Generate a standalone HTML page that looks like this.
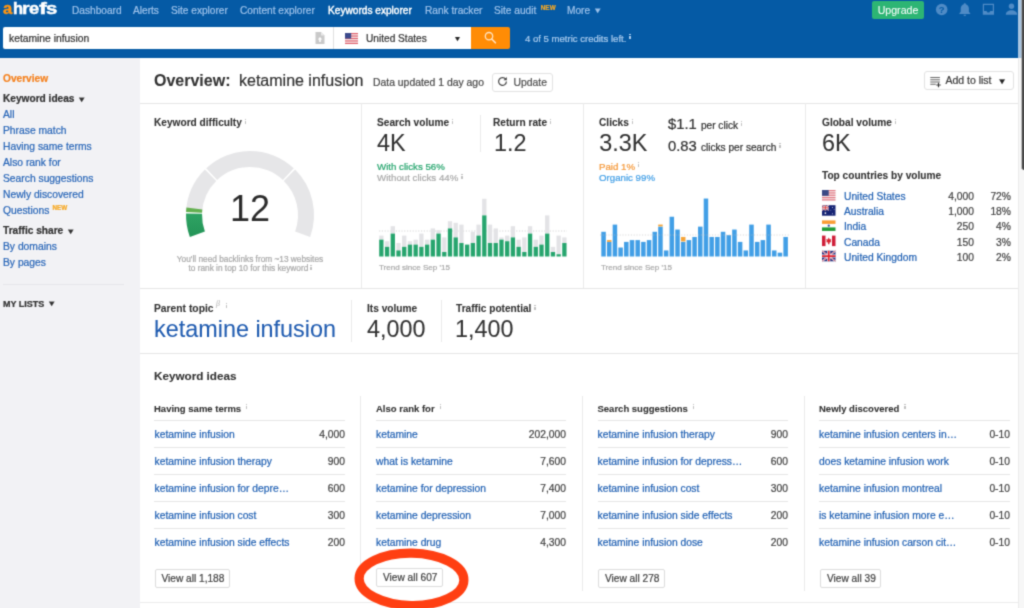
<!DOCTYPE html>
<html><head><meta charset="utf-8"><title>Keywords explorer</title>
<style>
*{box-sizing:border-box;margin:0;padding:0}
html,body{width:1024px;height:608px;overflow:hidden;background:#fff}
body{font-family:"Liberation Sans",sans-serif;font-size:10.15px;color:#333;position:relative}
.a{position:absolute;white-space:nowrap;line-height:1}
.hdr{left:-12px;top:-12px;width:1048px;height:70px;background:#055aa5}
.nav{top:4.6px;font-size:10.15px;color:#9cc1ea;line-height:11px}
.nav.on{color:#fff;font-weight:normal;-webkit-text-stroke:0.4px #fff}
.side{left:-12px;top:58px;width:152px;height:562px;background:#f2f2f5}
.sl{left:3px;font-size:10.3px;margin-top:.4px;color:#2a67b8;line-height:11px}
.sb{left:3px;font-size:10.15px;margin-top:.4px;color:#333;font-weight:bold;line-height:11px}
.b{font-weight:bold;color:#333;-webkit-text-stroke:0.08px}
.lnk{color:#2463b4}
.big{font-size:23.4px;color:#333;line-height:24px;margin-top:1.2px;-webkit-text-stroke:0.05px}
.i{display:inline-block;width:1.25px;height:5px;margin-left:3px;position:relative;top:-2.5px;font-size:0;line-height:0;vertical-align:baseline;background:linear-gradient(#c2c2c2 0,#c2c2c2 1.15px,transparent 1.15px,transparent 1.9px,#c2c2c2 1.9px,#c2c2c2 100%)}
.ib{background:linear-gradient(#a9cbee 0,#a9cbee 1.15px,transparent 1.15px,transparent 1.9px,#a9cbee 1.9px,#a9cbee 100%)}
.beta{font-size:8px;font-style:italic;font-weight:normal;color:#bdbdbd;position:relative;top:-5.6px;margin-left:2.5px;font-family:"Liberation Serif",serif}
.hl{position:absolute;height:1px;background:#e6e6e6}
.vl{position:absolute;width:1px;background:#eaeaea}
.btn{position:absolute;border:1px solid #dcdcdc;border-radius:2px;background:#fff;color:#444;font-size:10.15px;line-height:11px;white-space:nowrap}
.kw{font-size:10.3px;line-height:11px;color:#2463b4}
.num{font-size:10.3px;line-height:11px;color:#444;text-align:right}
.ct{font-size:9.7px;line-height:10px}
.new{font-size:6.3px;color:#f7a823;font-weight:bold;position:relative;top:-4px;margin-left:2px;letter-spacing:0.1px}
#wrap{position:absolute;left:-12px;top:-12px;width:1048px;height:632px;overflow:hidden;will-change:transform;filter:url(#soft);background:#fff}
#page{position:absolute;left:12px;top:12px;width:1024px;height:608px;-webkit-text-stroke:0.22px}
</style></head><body><svg width="0" height="0" style="position:absolute"><defs><filter id="soft" x="0" y="0" width="100%" height="100%" color-interpolation-filters="sRGB"><feConvolveMatrix order="3" kernelMatrix="1 4 1 4 16 4 1 4 1" divisor="36" edgeMode="duplicate" preserveAlpha="true"/></filter></defs></svg><div id="wrap"><div id="page">

<!-- ================= HEADER ================= -->
<div class="a hdr"></div>
<div class="a" id="logo" style="left:0;top:0;width:60px;height:20px"><span style="position:absolute;left:2.6px;top:-1.7px;font-size:18px;font-weight:bold;line-height:20px;color:#ff9512;-webkit-text-stroke:0.5px #ff9512;transform-origin:0 16px;transform:scale(0.92,0.95)">a</span><span style="position:absolute;left:12.6px;top:-1.7px;font-size:18px;font-weight:bold;line-height:20px;color:#fff;-webkit-text-stroke:0.5px #fff;transform-origin:0 16px;transform:scale(0.92,0.95)">h</span><span style="position:absolute;left:22.3px;top:-1.7px;font-size:18px;font-weight:bold;line-height:20px;color:#fff;-webkit-text-stroke:0.5px #fff;transform-origin:0 16px;transform:scale(1.08,0.95)">r</span><span style="position:absolute;left:28.9px;top:-1.7px;font-size:18px;font-weight:bold;line-height:20px;color:#fff;-webkit-text-stroke:0.5px #fff;transform-origin:0 16px;transform:scale(1.02,0.95)">e</span><span style="position:absolute;left:39.3px;top:-1.7px;font-size:18px;font-weight:bold;line-height:20px;color:#fff;-webkit-text-stroke:0.5px #fff;transform-origin:0 16px;transform:scale(1.3,0.95)">f</span><span style="position:absolute;left:45.9px;top:-1.7px;font-size:18px;font-weight:bold;line-height:20px;color:#fff;-webkit-text-stroke:0.5px #fff;transform-origin:0 16px;transform:scale(1.13,0.95)">s</span></div>
<div class="a nav" style="left:72px">Dashboard</div>
<div class="a nav" style="left:133px">Alerts</div>
<div class="a nav" style="left:171px">Site explorer</div>
<div class="a nav" style="left:240px">Content explorer</div>
<div class="a nav on" style="left:328px">Keywords explorer</div>
<div class="a nav" style="left:425px">Rank tracker</div>
<div class="a nav" style="left:494px">Site audit<span class="new" style="margin-left:4.5px">NEW</span></div>
<div class="a nav" style="left:567px">More <span style="font-size:7.5px;position:relative;top:-0.8px;display:inline-block;transform:scaleX(1.2);margin-left:1px">&#9660;</span></div>

<div class="a" style="left:872px;top:1px;width:52px;height:18px;background:#2db574;border-radius:2px;color:#fff;font-size:10.6px;line-height:18px;text-align:center;-webkit-text-stroke:0.05px">Upgrade</div>
<svg class="a" style="left:930px;top:0" width="94" height="22" viewBox="930 0 94 22">
 <circle cx="941.7" cy="9.5" r="5.8" fill="#4f8bc6"/>
 <text x="941.7" y="13" font-family="Liberation Sans" font-weight="bold" font-size="9.5" fill="#055aa5" text-anchor="middle">?</text>
 <path d="M964.8 3.2c-.7 0-1.1.5-1.1 1.1-2 .6-3 2.300-3 4.400v3l-1.400 1.700v.6h11v-.6l-1.400-1.700v-3c0-2.100-1-3.800-3-4.400 0-.6-.4-1.100-1.100-1.100zM963.5 14.800a1.300 1.300 0 0 0 2.600 0z" fill="#4f8bc6"/>
 <path d="M982.8 3.800h11.200v11h-11.200z M984 5v6h2.500l1 1.600h1.800l1-1.600h2.500v-6z" fill="#4f8bc6" fill-rule="evenodd"/>
 <circle cx="1011.500" cy="6.300" r="2.700" fill="#4f8bc6"/>
 <path d="M1005.800 14.800c0-3 2.500-4.500 5.700-4.500s5.700 1.500 5.700 4.500z" fill="#4f8bc6"/>
</svg>

<!-- search row -->
<div class="a" style="left:3px;top:27px;width:468px;height:22px;background:#fff;border-radius:2px 0 0 2px"></div>
<div class="a" style="left:9px;top:33px;font-size:10.3px;color:#333;line-height:11px">ketamine infusion</div>
<svg class="a" style="left:314px;top:31px" width="12" height="14" viewBox="0 0 12 14"><path d="M1.500 1h5.500l3.500 3.500v8.500h-9z" fill="#c9c9c9"/><path d="M7 1v3.500h3.500z" fill="#e9e9e9"/><path d="M6 6l2.300 2.600h-1.500v2.400h-1.600v-2.400h-1.500z" fill="#fff"/></svg>
<div class="vl" style="left:333px;top:27px;height:22px;background:#e0e0e0"></div>
<svg class="a" style="left:344.5px;top:32.5px" width="13" height="11" viewBox="0 0 13 11"><rect width="13" height="11" fill="#f6eeee"/><g fill="#e0606c"><rect y="0" width="13" height="1.2"/><rect y="2.450" width="13" height="1.2"/><rect y="4.900" width="13" height="1.2"/><rect y="7.350" width="13" height="1.2"/><rect y="9.800" width="13" height="1.2"/></g><rect width="6.200" height="5.600" fill="#3c4a8c"/></svg>
<div class="a" style="left:366px;top:33px;font-size:10.15px;color:#333;line-height:11px">United States</div>
<div class="a" style="left:453.5px;top:34.5px;font-size:7px;color:#222;line-height:8px;transform:scaleX(1.15)">&#9660;</div>
<div class="a" style="left:471px;top:27px;width:39.3px;height:21.8px;background:#ff8c05;border-radius:0 2px 2px 0"></div>
<svg class="a" style="left:482px;top:29px" width="18" height="18" viewBox="482 29 18 18"><circle cx="489" cy="36.2" r="3.700" fill="none" stroke="#ffe3c2" stroke-width="1.300"/><path d="M491.700 39l3.700 3.800" stroke="#ffe3c2" stroke-width="1.600" stroke-linecap="round"/></svg>
<div class="a" style="left:525px;top:33.500px;font-size:9.55px;color:#a9cbee;line-height:10px">4 of 5 metric credits left.<span class="i ib" style="margin-left:3px;top:-2.8px"></span></div>

<!-- ================= SIDEBAR ================= -->
<div class="a side"></div>
<div class="a sb" style="top:72.6px;color:#f5821f">Overview</div>
<div class="a sb" style="top:93px">Keyword ideas <span style="font-size:7.5px;position:relative;top:-0.8px;display:inline-block;transform:scaleX(1.2);margin-left:1px">&#9660;</span></div>
<div class="a sl" style="top:109px">All</div>
<div class="a sl" style="top:125px">Phrase match</div>
<div class="a sl" style="top:141px">Having same terms</div>
<div class="a sl" style="top:157px">Also rank for</div>
<div class="a sl" style="top:173px">Search suggestions</div>
<div class="a sl" style="top:189px">Newly discovered</div>
<div class="a sl" style="top:205px">Questions<span class="new" style="margin-left:3px">NEW</span></div>
<div class="a sb" style="top:225px">Traffic share <span style="font-size:7.5px;position:relative;top:-0.8px;display:inline-block;transform:scaleX(1.2);margin-left:1px">&#9660;</span></div>
<div class="a sl" style="top:241px">By domains</div>
<div class="a sl" style="top:257px">By pages</div>
<div class="hl" style="left:3px;top:284px;width:121px;background:#e6e6ea"></div>
<div class="a sb" style="top:299.8px;font-size:9px;line-height:9px">MY LISTS <span style="font-size:7.5px;position:relative;top:-0.8px;display:inline-block;transform:scaleX(1.2);margin-left:1px">&#9660;</span></div>

<!-- ================= TITLE ROW ================= -->
<div class="a b" style="left:154px;top:72px;font-size:16px;line-height:18px">Overview:</div>
<div class="a" style="left:239px;top:72px;font-size:16px;line-height:18px;color:#333">ketamine infusion</div>
<div class="a" style="left:373px;top:77.3px;font-size:10.4px;line-height:11px;color:#4a4a4a">Data updated 1 day ago</div>
<div class="btn" style="left:491.5px;top:72.5px;width:61.5px;height:19px;border-color:#e2e2e2;border-radius:3px"></div>
<svg class="a" style="left:497px;top:76px" width="11" height="11" viewBox="0 0 11 11"><path d="M8.700 3.200A3.900 3.900 0 1 0 9.400 5.500" fill="none" stroke="#444" stroke-width="1.200"/><path d="M9.800 1v3.300h-3.300z" fill="#444"/></svg>
<div class="a" style="left:513.5px;top:76.800px;font-size:10.4px;line-height:11px;color:#505050">Update</div>

<div class="btn" style="left:923.8px;top:71.3px;width:90px;height:18.7px;border-color:#e2e2e2;border-radius:3px"></div>
<svg class="a" style="left:929.8px;top:75.5px" width="12" height="12" viewBox="0 0 12 12"><path d="M0.300 1.500h9.600M0.300 3.750h9.600M0.300 6h9.600M0.300 8.250h5.500" stroke="#6a6a6a" stroke-width="1.150"/><path d="M8.500 6.800v4.400M6.300 9h4.400" stroke="#333" stroke-width="1.100"/></svg>
<div class="a" style="left:945.4px;top:75.400px;font-size:10.5px;line-height:11px;color:#3c3c3c">Add to list</div>
<div class="a" style="left:998px;top:77.8px;font-size:8px;color:#222;line-height:8px;transform:scaleX(1.15)">&#9660;</div>

<div class="hl" style="left:140px;top:103px;width:878px"></div>

<!-- ================= ROW 1 ================= -->
<div class="vl" style="left:361px;top:103px;height:186px"></div>
<div class="vl" style="left:583px;top:103px;height:186px"></div>
<div class="vl" style="left:805px;top:103px;height:186px"></div>
<div class="hl" style="left:140px;top:288px;width:878px"></div>

<!-- KD -->
<div class="a b" style="left:154px;top:117.4px;line-height:11px">Keyword difficulty<span class="i"></span></div>
<svg class="a" style="left:140px;top:103px" width="222" height="186" viewBox="140 103 222 186">
<defs><linearGradient id="gg" x1="0" y1="0" x2="0" y2="1"><stop offset="0" stop-color="#2fa363"/><stop offset="1" stop-color="#239457"/></linearGradient></defs>
<path d="M186.09 211.65 A64 64 0 0 1 204.90 169.59 L216.18 180.94 A48 48 0 0 0 202.07 212.49 Z" fill="#e6e6e8"/>
<path d="M206.19 168.35 A64 64 0 0 1 293.81 168.35 L282.86 180.01 A48 48 0 0 0 217.14 180.01 Z" fill="#e6e6e8"/>
<path d="M295.10 169.59 A64 64 0 0 1 310.14 236.89 L295.11 231.42 A48 48 0 0 0 283.82 180.94 Z" fill="#e6e6e8"/>
<path d="M189.86 236.89 A64 64 0 0 1 186.02 213.44 L202.01 213.83 A48 48 0 0 0 204.89 231.42 Z" fill="url(#gg)"/>
<path d="M186.07 211.99 A64 64 0 0 1 186.44 207.53 L202.33 209.40 A48 48 0 0 0 202.05 212.74 Z" fill="#63b04f"/>
</svg>
<div class="a" style="left:200px;top:191px;width:100px;text-align:center;font-size:36px;line-height:36px;color:#2b2b2b;-webkit-text-stroke:0">12</div>
<div class="a" style="left:140px;top:254.8px;width:220px;text-align:center;font-size:8.300px;line-height:9.500px;color:#aaa">You'll need backlinks from ~13 websites<br>to rank in top 10 for this keyword<span class="i" style="top:-1.5px;margin-left:2px;height:4.5px"></span></div>

<!-- Search volume -->
<div class="a b" style="left:377px;top:117.4px;line-height:11px">Search volume<span class="i"></span></div>
<div class="a big" style="left:377px;top:130px">4K</div>
<div class="vl" style="left:480px;top:115px;height:37px"></div>
<div class="a b" style="left:493px;top:117.4px;line-height:11px">Return rate<span class="i"></span></div>
<div class="a big" style="left:494px;top:130px">1.2</div>
<div class="a ct" style="left:377px;top:161.5px;color:#27a56e">With clicks 56%</div>
<div class="a ct" style="left:377px;top:173px;color:#aaa">Without clicks 44%<span class="i"></span></div>
<svg class="a" style="left:362px;top:190px" width="221" height="90" viewBox="362 190 221 90">
<path d="M379 231h188" stroke="#ccc" stroke-width="0.800" stroke-dasharray="1.200 1.600"/>
<rect x="379.20" y="235.61" width="4.3" height="4.04" fill="#e3e3e6"/>
<rect x="379.20" y="239.65" width="4.3" height="16.85" fill="#27a56e"/>
<rect x="384.92" y="241.23" width="4.3" height="5.62" fill="#e3e3e6"/>
<rect x="384.92" y="246.84" width="4.3" height="9.66" fill="#27a56e"/>
<rect x="390.64" y="226.18" width="4.3" height="7.41" fill="#e3e3e6"/>
<rect x="390.64" y="233.59" width="4.3" height="22.91" fill="#27a56e"/>
<rect x="396.36" y="243.02" width="4.3" height="7.41" fill="#e3e3e6"/>
<rect x="396.36" y="250.44" width="4.3" height="6.06" fill="#27a56e"/>
<rect x="402.08" y="235.61" width="4.3" height="11.23" fill="#e3e3e6"/>
<rect x="402.08" y="246.84" width="4.3" height="9.66" fill="#27a56e"/>
<rect x="407.80" y="241.23" width="4.3" height="3.37" fill="#e3e3e6"/>
<rect x="407.80" y="244.60" width="4.3" height="11.90" fill="#27a56e"/>
<rect x="413.52" y="239.65" width="4.3" height="4.94" fill="#e3e3e6"/>
<rect x="413.52" y="244.60" width="4.3" height="11.90" fill="#27a56e"/>
<rect x="419.24" y="233.59" width="4.3" height="13.25" fill="#e3e3e6"/>
<rect x="419.24" y="246.84" width="4.3" height="9.66" fill="#27a56e"/>
<rect x="424.96" y="239.65" width="4.3" height="4.94" fill="#e3e3e6"/>
<rect x="424.96" y="244.60" width="4.3" height="11.90" fill="#27a56e"/>
<rect x="430.68" y="228.42" width="4.3" height="11.23" fill="#e3e3e6"/>
<rect x="430.68" y="239.65" width="4.3" height="16.85" fill="#27a56e"/>
<rect x="436.40" y="230.22" width="4.3" height="3.37" fill="#e3e3e6"/>
<rect x="436.40" y="233.59" width="4.3" height="22.91" fill="#27a56e"/>
<rect x="442.12" y="237.41" width="4.3" height="14.60" fill="#e3e3e6"/>
<rect x="442.12" y="252.01" width="4.3" height="4.49" fill="#27a56e"/>
<rect x="447.84" y="221.23" width="4.3" height="7.19" fill="#e3e3e6"/>
<rect x="447.84" y="228.42" width="4.3" height="28.08" fill="#27a56e"/>
<rect x="453.56" y="222.81" width="4.3" height="14.60" fill="#e3e3e6"/>
<rect x="453.56" y="237.41" width="4.3" height="19.09" fill="#27a56e"/>
<rect x="459.28" y="224.60" width="4.3" height="18.42" fill="#e3e3e6"/>
<rect x="459.28" y="243.02" width="4.3" height="13.48" fill="#27a56e"/>
<rect x="465.00" y="244.60" width="4.3" height="11.90" fill="#27a56e"/>
<rect x="470.72" y="231.79" width="4.3" height="11.23" fill="#e3e3e6"/>
<rect x="470.72" y="243.02" width="4.3" height="13.48" fill="#27a56e"/>
<rect x="476.44" y="224.60" width="4.3" height="11.01" fill="#e3e3e6"/>
<rect x="476.44" y="235.61" width="4.3" height="20.89" fill="#27a56e"/>
<rect x="482.16" y="198.77" width="4.3" height="16.62" fill="#e3e3e6"/>
<rect x="482.16" y="215.39" width="4.3" height="41.11" fill="#27a56e"/>
<rect x="487.88" y="224.60" width="4.3" height="18.42" fill="#e3e3e6"/>
<rect x="487.88" y="243.02" width="4.3" height="13.48" fill="#27a56e"/>
<rect x="493.60" y="228.42" width="4.3" height="14.60" fill="#e3e3e6"/>
<rect x="493.60" y="243.02" width="4.3" height="13.48" fill="#27a56e"/>
<rect x="499.32" y="237.41" width="4.3" height="2.25" fill="#e3e3e6"/>
<rect x="499.32" y="239.65" width="4.3" height="16.85" fill="#27a56e"/>
<rect x="505.04" y="235.61" width="4.3" height="5.62" fill="#e3e3e6"/>
<rect x="505.04" y="241.23" width="4.3" height="15.27" fill="#27a56e"/>
<rect x="510.76" y="226.18" width="4.3" height="11.23" fill="#e3e3e6"/>
<rect x="510.76" y="237.41" width="4.3" height="19.09" fill="#27a56e"/>
<rect x="516.48" y="239.65" width="4.3" height="7.19" fill="#e3e3e6"/>
<rect x="516.48" y="246.84" width="4.3" height="9.66" fill="#27a56e"/>
<rect x="522.20" y="237.41" width="4.3" height="14.60" fill="#e3e3e6"/>
<rect x="522.20" y="252.01" width="4.3" height="4.49" fill="#27a56e"/>
<rect x="527.92" y="226.18" width="4.3" height="7.41" fill="#e3e3e6"/>
<rect x="527.92" y="233.59" width="4.3" height="22.91" fill="#27a56e"/>
<rect x="533.64" y="239.65" width="4.3" height="7.19" fill="#e3e3e6"/>
<rect x="533.64" y="246.84" width="4.3" height="9.66" fill="#27a56e"/>
<rect x="539.36" y="235.61" width="4.3" height="8.98" fill="#e3e3e6"/>
<rect x="539.36" y="244.60" width="4.3" height="11.90" fill="#27a56e"/>
<rect x="545.08" y="215.39" width="4.3" height="18.19" fill="#e3e3e6"/>
<rect x="545.08" y="233.59" width="4.3" height="22.91" fill="#27a56e"/>
<rect x="550.80" y="246.84" width="4.3" height="5.17" fill="#e3e3e6"/>
<rect x="550.80" y="252.01" width="4.3" height="4.49" fill="#27a56e"/>
<rect x="556.52" y="235.61" width="4.3" height="18.64" fill="#e3e3e6"/>
<rect x="556.52" y="254.25" width="4.3" height="2.25" fill="#27a56e"/>
<rect x="562.24" y="237.41" width="4.3" height="5.62" fill="#e3e3e6"/>
<rect x="562.24" y="243.02" width="4.3" height="13.48" fill="#27a56e"/>
</svg>
<div class="a" style="left:379px;top:263px;font-size:8.050px;line-height:9px;color:#aaa">Trend since Sep '15</div>

<!-- Clicks -->
<div class="a b" style="left:599px;top:117.4px;line-height:11px">Clicks<span class="i"></span></div>
<div class="a big" style="left:599.2px;top:130px">3.3K</div>
<div class="a" style="left:668px;top:116px;font-size:14.800px;line-height:16px;color:#333">$1.1 <span style="font-size:10.15px">per click</span><span class="i" style="top:-3px"></span></div>
<div class="a" style="left:668px;top:137.6px;font-size:14.800px;line-height:16px;color:#333">0.83 <span style="font-size:10.15px">clicks per search</span><span class="i" style="top:-3px"></span></div>
<div class="a ct" style="left:599px;top:161.5px;color:#f5993a">Paid 1%<span class="i"></span></div>
<div class="a ct" style="left:599px;top:173px;color:#429fe6">Organic 99%</div>
<svg class="a" style="left:584px;top:190px" width="221" height="90" viewBox="584 190 221 90">
<rect x="601.30" y="231.79" width="4.5" height="24.71" fill="#429fe6"/>
<rect x="606.99" y="241.90" width="4.5" height="14.60" fill="#429fe6"/>
<rect x="606.99" y="240.08" width="4.5" height="1.80" fill="#f5a53a"/>
<rect x="612.68" y="224.60" width="4.5" height="31.90" fill="#429fe6"/>
<rect x="618.37" y="247.52" width="4.5" height="8.98" fill="#429fe6"/>
<rect x="624.06" y="241.90" width="4.5" height="14.60" fill="#429fe6"/>
<rect x="629.75" y="240.10" width="4.5" height="16.40" fill="#429fe6"/>
<rect x="635.44" y="240.10" width="4.5" height="16.40" fill="#429fe6"/>
<rect x="641.13" y="241.90" width="4.5" height="14.60" fill="#429fe6"/>
<rect x="646.82" y="240.10" width="4.5" height="16.40" fill="#429fe6"/>
<rect x="652.51" y="231.79" width="4.5" height="24.71" fill="#429fe6"/>
<rect x="658.20" y="226.63" width="4.5" height="29.87" fill="#429fe6"/>
<rect x="658.20" y="224.58" width="4.5" height="1.80" fill="#f5a53a"/>
<rect x="663.89" y="250.44" width="4.5" height="6.06" fill="#429fe6"/>
<rect x="669.58" y="216.74" width="4.5" height="39.76" fill="#429fe6"/>
<rect x="675.27" y="229.55" width="4.5" height="26.95" fill="#429fe6"/>
<rect x="680.96" y="241.90" width="4.5" height="14.60" fill="#429fe6"/>
<rect x="680.96" y="236.94" width="4.5" height="4.49" fill="#f5a53a"/>
<rect x="686.65" y="240.10" width="4.5" height="16.40" fill="#429fe6"/>
<rect x="692.34" y="236.96" width="4.5" height="19.54" fill="#429fe6"/>
<rect x="698.03" y="226.63" width="4.5" height="29.87" fill="#429fe6"/>
<rect x="703.72" y="198.55" width="4.5" height="57.95" fill="#429fe6"/>
<rect x="709.41" y="236.96" width="4.5" height="19.54" fill="#429fe6"/>
<rect x="715.10" y="236.96" width="4.5" height="19.54" fill="#429fe6"/>
<rect x="720.79" y="231.79" width="4.5" height="24.71" fill="#429fe6"/>
<rect x="726.48" y="235.16" width="4.5" height="21.34" fill="#429fe6"/>
<rect x="732.17" y="229.55" width="4.5" height="26.95" fill="#429fe6"/>
<rect x="737.86" y="241.90" width="4.5" height="14.60" fill="#429fe6"/>
<rect x="743.55" y="250.44" width="4.5" height="6.06" fill="#429fe6"/>
<rect x="749.24" y="224.60" width="4.5" height="31.90" fill="#429fe6"/>
<rect x="754.93" y="241.90" width="4.5" height="14.60" fill="#429fe6"/>
<rect x="760.62" y="240.10" width="4.5" height="16.40" fill="#429fe6"/>
<rect x="766.31" y="224.60" width="4.5" height="31.90" fill="#429fe6"/>
<rect x="772.00" y="250.44" width="4.5" height="6.06" fill="#429fe6"/>
<rect x="777.69" y="252.68" width="4.5" height="3.82" fill="#429fe6"/>
<rect x="783.38" y="236.96" width="4.5" height="19.54" fill="#429fe6"/>
<path d="M600 235h190" stroke="#bbb" stroke-width="0.800" stroke-dasharray="1.200 1.600" opacity="0.700"/>
</svg>
<div class="a" style="left:601px;top:263px;font-size:8.050px;line-height:9px;color:#aaa">Trend since Sep '15</div>

<!-- Global volume -->
<div class="a b" style="left:822px;top:117.4px;line-height:11px">Global volume<span class="i"></span></div>
<div class="a big" style="left:822px;top:130px">6K</div>
<div class="a b" style="left:822px;top:170px;line-height:11px">Top countries by volume</div>

<!-- flags -->
<svg class="a" style="left:822.2px;top:189.8px" width="14" height="72" viewBox="0 0 14 72">
 <!-- US -->
 <g><rect width="13.500" height="10.500" fill="#f7ecec"/><g fill="#e27884"><rect y="0" width="13.500" height="1.2"/><rect y="2.330" width="13.500" height="1.2"/><rect y="4.660" width="13.500" height="1.2"/><rect y="7" width="13.500" height="1.2"/><rect y="9.300" width="13.500" height="1.2"/></g><rect width="6.700" height="5.800" fill="#3b4a85"/></g>
 <!-- AU -->
 <g transform="translate(0,15.200)"><rect width="13.500" height="10.500" fill="#162474"/><path d="M0 0l6.700 5.200M6.700 0L0 5.200" stroke="#fff" stroke-width="1.200"/><path d="M0 0l6.700 5.200M6.700 0L0 5.200" stroke="#d33" stroke-width="0.500"/><path d="M3.350 0v5.200M0 2.600h6.700" stroke="#fff" stroke-width="1.700"/><path d="M3.350 0v5.200M0 2.600h6.700" stroke="#d33" stroke-width="0.900"/><circle cx="3.400" cy="7.900" r="0.850" fill="#fff"/><circle cx="10.500" cy="2.200" r="0.500" fill="#dde"/><circle cx="10.500" cy="8.500" r="0.500" fill="#dde"/><circle cx="8.800" cy="4.900" r="0.450" fill="#dde"/><circle cx="12.100" cy="4.400" r="0.450" fill="#dde"/></g>
 <!-- IN -->
 <g transform="translate(0,30.400)"><rect width="13.500" height="10.500" fill="#fff"/><rect width="13.500" height="3.500" fill="#fa9c34"/><rect y="7" width="13.500" height="3.500" fill="#1f9a35"/><circle cx="6.750" cy="5.250" r="1.150" fill="#3a4aa0"/></g>
 <!-- CA -->
 <g transform="translate(0,45.600)"><rect width="13.500" height="10.500" fill="#fff"/><rect width="3.500" height="10.500" fill="#cf1f3a"/><rect x="10" width="3.500" height="10.500" fill="#cf1f3a"/><path d="M6.750 1.800l1.050 2 1.500-.35-.65 2.200.85.650-2.050.55v1.750h-1.400v-1.750l-2.050-.55.850-.65-.65-2.200 1.500.35z" fill="#d8232f"/></g>
 <!-- UK -->
 <g transform="translate(0,60.800)"><rect width="13.500" height="10.500" fill="#232e7c"/><path d="M0 0l13.500 10.500M13.500 0L0 10.500" stroke="#e8e8f4" stroke-width="1.600"/><path d="M0 0l13.500 10.500M13.500 0L0 10.500" stroke="#d8232f" stroke-width="0.600"/><path d="M6.750 0v10.500M0 5.250h13.500" stroke="#fff" stroke-width="3"/><path d="M6.750 0v10.500M0 5.250h13.500" stroke="#e0222e" stroke-width="1.800"/></g>
</svg>

<div class="a kw" style="left:844px;top:190.500px;font-size:10.25px">United States</div><div class="a num" style="left:924px;width:50px;top:190.500px">4,000</div><div class="a num" style="left:971px;width:40px;top:190.500px">72%</div>
<div class="a kw" style="left:844px;top:205.800px;font-size:10.25px">Australia</div><div class="a num" style="left:924px;width:50px;top:205.800px">1,000</div><div class="a num" style="left:971px;width:40px;top:205.800px">18%</div>
<div class="a kw" style="left:844px;top:221.200px;font-size:10.25px">India</div><div class="a num" style="left:924px;width:50px;top:221.200px">250</div><div class="a num" style="left:971px;width:40px;top:221.200px">4%</div>
<div class="a kw" style="left:844px;top:236.600px;font-size:10.25px">Canada</div><div class="a num" style="left:924px;width:50px;top:236.600px">150</div><div class="a num" style="left:971px;width:40px;top:236.600px">3%</div>
<div class="a kw" style="left:844px;top:252px;font-size:10.25px">United Kingdom</div><div class="a num" style="left:924px;width:50px;top:252px">100</div><div class="a num" style="left:971px;width:40px;top:252px">2%</div>

<!-- ================= ROW 2 ================= -->
<div class="a b" style="left:154px;top:303px;line-height:11px;font-size:10.3px">Parent topic<span class="beta">&beta;</span><span class="i" style="margin-left:6px;top:-4.3px"></span></div>
<div class="a" style="left:154px;top:316px;font-size:23.400px;line-height:26px;color:#1f5bb0;-webkit-text-stroke:0.06px">ketamine infusion</div>
<div class="vl" style="left:351px;top:300px;height:42px"></div>
<div class="a b" style="left:367px;top:303px;line-height:11px;font-size:10.15px">Its volume</div>
<div class="a big" style="left:367px;top:315.8px">4,000</div>
<div class="vl" style="left:441px;top:300px;height:42px"></div>
<div class="a b" style="left:456px;top:303px;line-height:11px;font-size:10.15px">Traffic potential<span class="i"></span></div>
<div class="a big" style="left:455px;top:315.8px">1,400</div>
<div class="hl" style="left:140px;top:353px;width:878px"></div>

<!-- ================= KEYWORD IDEAS ================= -->
<div class="a b" style="left:154px;top:370px;font-size:11.700px;line-height:12px">Keyword ideas</div>

<div class="vl" style="left:360px;top:396px;height:195px"></div>
<div class="vl" style="left:582px;top:396px;height:195px"></div>
<div class="vl" style="left:804px;top:396px;height:195px"></div>

<!-- col 1 -->
<div class="a b ch" style="left:154px;top:403.500px;font-size:9.5px;line-height:10px">Having same terms<span class="i" style="margin-left:5px"></span></div>
<div class="hl" style="left:154px;top:420px;width:191px"></div>
<div class="a kw" style="left:154.5px;top:429px">ketamine infusion</div><div class="a num" style="left:285px;width:60px;top:429px">4,000</div>
<div class="hl" style="left:154px;top:447px;width:191px"></div>
<div class="a kw" style="left:154.5px;top:456px">ketamine infusion therapy</div><div class="a num" style="left:285px;width:60px;top:456px">900</div>
<div class="hl" style="left:154px;top:474px;width:191px"></div>
<div class="a kw" style="left:154.5px;top:483px">ketamine infusion for depre&hellip;</div><div class="a num" style="left:285px;width:60px;top:483px">600</div>
<div class="hl" style="left:154px;top:501px;width:191px"></div>
<div class="a kw" style="left:154.5px;top:510px">ketamine infusion cost</div><div class="a num" style="left:285px;width:60px;top:510px">300</div>
<div class="hl" style="left:154px;top:528px;width:191px"></div>
<div class="a kw" style="left:154.5px;top:537px">ketamine infusion side effects</div><div class="a num" style="left:285px;width:60px;top:537px">200</div>
<div class="btn" style="left:155px;top:569px;width:75px;height:18.5px;padding:3.3px 0 0 5.500px">View all 1,188</div>

<!-- col 2 -->
<div class="a b ch" style="left:376px;top:403.500px;font-size:9.5px;line-height:10px">Also rank for<span class="i" style="margin-left:5px"></span></div>
<div class="hl" style="left:376px;top:420px;width:190px"></div>
<div class="a kw" style="left:376px;top:429px">ketamine</div><div class="a num" style="left:506px;width:60px;top:429px">202,000</div>
<div class="hl" style="left:376px;top:447px;width:190px"></div>
<div class="a kw" style="left:376px;top:456px">what is ketamine</div><div class="a num" style="left:506px;width:60px;top:456px">7,600</div>
<div class="hl" style="left:376px;top:474px;width:190px"></div>
<div class="a kw" style="left:376px;top:483px">ketamine for depression</div><div class="a num" style="left:506px;width:60px;top:483px">7,400</div>
<div class="hl" style="left:376px;top:501px;width:190px"></div>
<div class="a kw" style="left:376px;top:510px">ketamine depression</div><div class="a num" style="left:506px;width:60px;top:510px">7,000</div>
<div class="hl" style="left:376px;top:528px;width:190px"></div>
<div class="a kw" style="left:376px;top:537px">ketamine drug</div><div class="a num" style="left:506px;width:60px;top:537px">4,300</div>
<div class="btn" style="left:376px;top:568px;width:67px;height:18.5px;padding:3.3px 0 0 6px">View all 607</div>

<!-- col 3 -->
<div class="a b ch" style="left:597.500px;top:403.500px;font-size:9.5px;line-height:10px">Search suggestions<span class="i" style="margin-left:5px"></span></div>
<div class="hl" style="left:597.500px;top:420px;width:190.500px"></div>
<div class="a kw" style="left:597.500px;top:429px">ketamine infusion therapy</div><div class="a num" style="left:728px;width:60px;top:429px">900</div>
<div class="hl" style="left:597.500px;top:447px;width:190.500px"></div>
<div class="a kw" style="left:597.500px;top:456px">ketamine infusion for depress&hellip;</div><div class="a num" style="left:728px;width:60px;top:456px">600</div>
<div class="hl" style="left:597.500px;top:474px;width:190.500px"></div>
<div class="a kw" style="left:597.500px;top:483px">ketamine infusion cost</div><div class="a num" style="left:728px;width:60px;top:483px">300</div>
<div class="hl" style="left:597.500px;top:501px;width:190.500px"></div>
<div class="a kw" style="left:597.500px;top:510px">ketamine infusion side effects</div><div class="a num" style="left:728px;width:60px;top:510px">200</div>
<div class="hl" style="left:597.500px;top:528px;width:190.500px"></div>
<div class="a kw" style="left:597.500px;top:537px">ketamine infusion dose</div><div class="a num" style="left:728px;width:60px;top:537px">200</div>
<div class="btn" style="left:598px;top:569px;width:67px;height:18.5px;padding:3.3px 0 0 6px">View all 278</div>

<!-- col 4 -->
<div class="a b ch" style="left:819px;top:403.500px;font-size:9.5px;line-height:10px">Newly discovered<span class="i" style="margin-left:5px"></span></div>
<div class="hl" style="left:819px;top:420px;width:191px"></div>
<div class="a kw" style="left:819px;top:429px">ketamine infusion centers in&hellip;</div><div class="a num" style="left:950px;width:60px;top:429px">0-10</div>
<div class="hl" style="left:819px;top:447px;width:191px"></div>
<div class="a kw" style="left:819px;top:456px">does ketamine infusion work</div><div class="a num" style="left:950px;width:60px;top:456px">0-10</div>
<div class="hl" style="left:819px;top:474px;width:191px"></div>
<div class="a kw" style="left:819px;top:483px">ketamine infusion montreal</div><div class="a num" style="left:950px;width:60px;top:483px">0-10</div>
<div class="hl" style="left:819px;top:501px;width:191px"></div>
<div class="a kw" style="left:819px;top:510px">is ketamine infusion more e&hellip;</div><div class="a num" style="left:950px;width:60px;top:510px">0-10</div>
<div class="hl" style="left:819px;top:528px;width:191px"></div>
<div class="a kw" style="left:819px;top:537px">ketamine infusion carson cit&hellip;</div><div class="a num" style="left:950px;width:60px;top:537px">0-10</div>
<div class="btn" style="left:820px;top:569px;width:61px;height:18.5px;padding:3.3px 0 0 6px">View all 39</div>

<!-- bottom strip -->
<div class="hl" style="left:140px;top:601.8px;width:878px;background:#ececec"></div>

<!-- red ellipse -->
<svg class="a" style="left:340px;top:540px" width="140" height="80" viewBox="340 540 140 80"><ellipse cx="411.500" cy="579.300" rx="52.400" ry="26.200" fill="none" stroke="#ff3f12" stroke-width="9.200" transform="rotate(1 411.500 579.300)"/></svg>

<!-- scrollbar -->
<div class="a" style="left:1017.5px;top:-12px;width:18.5px;height:70px;background:#a9c5e0"></div>
<div class="a" style="left:1017.5px;top:58px;width:18.5px;height:562px;background:#f7f7f7;border-left:1px solid #ebebeb"></div>
<div class="a" style="left:1020.8px;top:-12px;width:1.6px;height:181px;background:#9a9a9a;opacity:.55"></div>
<div class="a" style="left:1022.1px;top:-12px;width:15px;height:182px;background:#4a4a4a;border-radius:0 0 0 2px"></div>

</div></div></body></html>
